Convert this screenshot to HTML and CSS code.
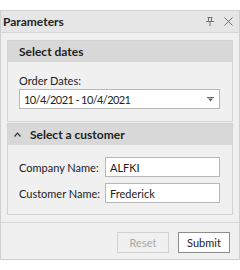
FILE: index.html
```html
<!DOCTYPE html>
<html lang="en">
<head>
    <meta charset="UTF-8">
    <title>Parameters</title>
    <link rel="stylesheet" href="styles.css">
</head>
<body>
    <div class="panel">
        <div class="panel-title">
            <span class="title-text">Parameters</span>
            <span class="title-buttons">
                <svg class="pin-icon" width="8" height="9" viewBox="0 0 8 9">
                    <path d="M1.5 0.5H6.5M2.5 0.5V4.5M5.5 0.5V4.5M0 4.5H8M4 4.5V9" stroke="#707070" stroke-width="1" fill="none"/>
                </svg>
                <svg class="close-icon" width="9" height="9" viewBox="0 0 9 9">
                    <path d="M0.5 0.5L8.5 8.5M8.5 0.5L0.5 8.5" stroke="#707070" stroke-width="1" fill="none"/>
                </svg>
            </span>
        </div>

        <div class="panel-content">
            <div class="group">
                <div class="group-header">Select dates</div>
                <div class="group-body dates">
                    <label class="field-label">Order Dates:</label>
                    <div class="combo">
                        <span class="combo-text">10/4/2021 - 10/4/2021</span>
                        <svg width="7" height="5" viewBox="0 0 7 5">
                            <path d="M0 0.5H7" stroke="#666" stroke-width="1"/>
                            <path d="M1 1.5H6L3.5 4.5Z" fill="#666"/>
                        </svg>
                    </div>
                </div>
            </div>

            <div class="group">
                <div class="group-header with-chevron">
                    <svg class="chevron" width="7" height="5" viewBox="0 0 7 5">
                        <path d="M0.5 4.5L3.5 1.2L6.5 4.5" stroke="#333" stroke-width="1.2" fill="none"/>
                    </svg>
                    <span>Select a customer</span>
                </div>
                <div class="group-body rows">
                    <div class="row">
                        <label class="row-label">Company Name:</label>
                        <div class="text-box">ALFKI</div>
                    </div>
                    <div class="row">
                        <label class="row-label">Customer Name:</label>
                        <div class="text-box">Frederick</div>
                    </div>
                </div>
            </div>
        </div>

        <div class="panel-footer">
            <button class="btn" disabled>Reset</button>
            <button class="btn btn-primary">Submit</button>
        </div>
    </div>
</body>
</html>
```

FILE: styles.css
```css
* {
    box-sizing: border-box;
    margin: 0;
    padding: 0;
}

body {
    font-family: Lato, "Noto Sans", sans-serif;
    font-size: 11px;
    color: #222;
    background-color: #fff;
    padding-top: 10px;
}

.panel {
    width: 240px;
    height: 250px;
    border: 1px solid #d0d0d0;
    background-color: #f0f0f0;
    display: flex;
    flex-direction: column;
}

.panel-title {
    height: 22px;
    flex-shrink: 0;
    background-color: #e6e6e6;
    border-bottom: 1px solid #d6d6d6;
    display: flex;
    align-items: center;
    justify-content: space-between;
    padding: 0 6px 0 2px;
}

.title-text {
    font-weight: bold;
    font-size: 12px;
}

.title-buttons {
    display: flex;
    align-items: center;
    gap: 10px;
}

.panel-content {
    height: 189px;
    flex-shrink: 0;
    padding: 7px 6px 0 6px;
    display: flex;
    flex-direction: column;
    gap: 1px;
}

.group {
    border: 1px solid #d2d2d2;
    background-color: #f0f0f0;
}

.group-header {
    height: 21px;
    background-color: #d8d8d8;
    font-weight: bold;
    font-size: 12px;
    display: flex;
    align-items: center;
    padding-left: 11px;
}

.group-header.with-chevron {
    padding-left: 6px;
    gap: 9px;
}

.group-body {
    padding: 10px 12px 12px 11px;
    white-space: nowrap;
}

.field-label {
    display: block;
    line-height: 17px;
}

.combo {
    height: 20px;
    background-color: #fff;
    border: 1px solid #b7b7b7;
    display: flex;
    align-items: center;
    justify-content: space-between;
    padding: 0 5px 0 4px;
}

.combo-text {
    letter-spacing: -0.6px;
}

.rows {
    display: flex;
    flex-direction: column;
    gap: 6px;
    padding-top: 12px;
    padding-bottom: 11px;
}

.row {
    display: flex;
    align-items: center;
}

.row-label {
    width: 86px;
    flex-shrink: 0;
}

.text-box {
    flex: 1;
    height: 20px;
    background-color: #fff;
    border: 1px solid #b7b7b7;
    display: flex;
    align-items: center;
    padding-left: 4px;
}

.panel-footer {
    flex: 1;
    border-top: 1px solid #d6d6d6;
    display: flex;
    justify-content: flex-end;
    align-items: flex-start;
    gap: 9px;
    padding: 9px 9px 0 0;
}

.btn {
    font-family: inherit;
    font-size: 11px;
    width: 52px;
    height: 21px;
    background-color: #fff;
    border: 1px solid #8c8c8c;
    color: #222;
}

.btn:disabled {
    background-color: #f0f0f0;
    border-color: #d2d2d2;
    color: #a8a8a8;
}
```
